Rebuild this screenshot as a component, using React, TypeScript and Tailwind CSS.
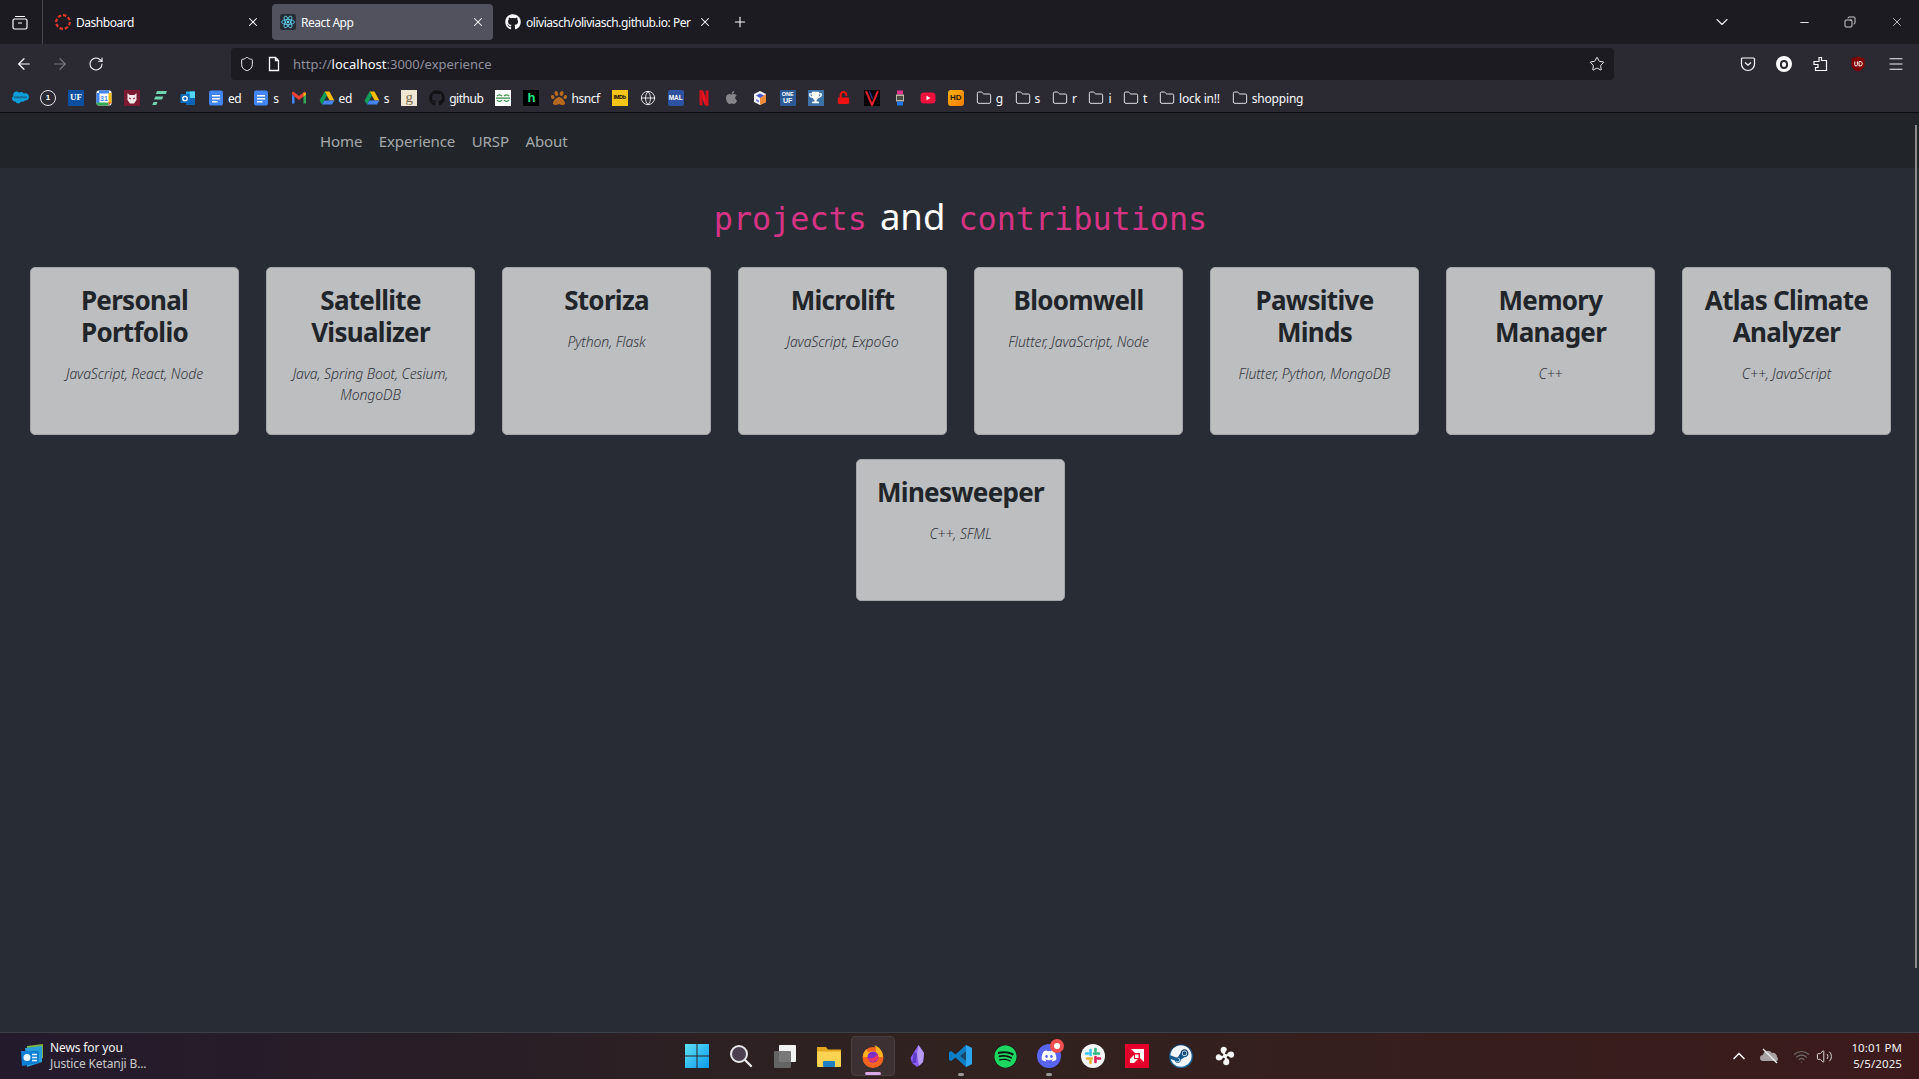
import type { ReactNode } from "react";
import { FaApple, FaDiscord, FaGithub, FaPaw, FaSalesforce, FaSpotify, FaSteam, FaTrophy, FaUnlock } from "react-icons/fa";
import { ArrowLeft, ArrowRight, ChevronDown, ChevronUp, Copy, Folder, Globe, Menu, Minus, Plus, RotateCw, Shield, Star, Volume2, Wifi, X } from "lucide-react";

const sans = "font-['Noto_Sans',sans-serif]";

const Ico = ({ children, size = 16 }: { children: ReactNode; size?: number }) => (
  <svg width={size} height={size} viewBox="0 0 16 16" className="shrink-0">
    {children}
  </svg>
);

const Box = ({ className, children }: { className: string; children?: ReactNode }) => (
  <span className={`flex h-4 w-4 shrink-0 items-center justify-center overflow-hidden font-['Liberation_Sans',sans-serif] font-bold ${className}`}>
    {children}
  </span>
);

const DocsIcon = () => (
  <Ico>
    <rect x="1" y="0.5" width="14" height="15" rx="2" fill="#4285f4" />
    <path d="M4 5h8v1.6H4zM4 8h8v1.6H4zM4 11h5.5v1.6H4z" fill="#fff" />
  </Ico>
);

const DriveIcon = () => (
  <Ico>
    <path d="M5.6 1.5h4.8l5 9h-4.8z" fill="#fbbc04" />
    <path d="M5.6 1.5l-5 9 2.4 4 5-9z" fill="#0f9d58" />
    <path d="M3 14.5h10l2.4-4H5.4z" fill="#4285f4" />
  </Ico>
);

const FolderIcon = () => <Folder size={16} color="#fbfbfe" strokeWidth={1.3} className="shrink-0" />;

const bookmarks: { icon: ReactNode; label?: string }[] = [
  { icon: <FaSalesforce size={17} color="#0d9dda" className="shrink-0" /> },
  {
    icon: (
      <span className="flex h-4 w-4 shrink-0 items-center justify-center rounded-full border-[1.5px] border-[#e8e8ea] font-['Liberation_Sans',sans-serif] text-[8px] font-bold text-white">
        1
      </span>
    ),
  },
  { icon: <Box className="bg-[#0b4f9e] font-['Liberation_Serif',serif] text-[9px] text-white">UF</Box> },
  {
    icon: (
      <Ico>
        <rect x="0.5" y="0.5" width="15" height="15" rx="2" fill="#fff" />
        <path d="M0.5 3h3v10h-3zM3 .5h10v3H3z" fill="#4285f4" />
        <path d="M12.5 3h3v10h-3z" fill="#fbbc04" />
        <path d="M0.5 12.5h12v3h-10a2 2 0 0 1-2-2z" fill="#34a853" />
        <path d="M12.5 12.5h3l-3 3z" fill="#ea4335" />
        <text x="8" y="11" textAnchor="middle" fontSize="7" fontWeight="700" fontFamily="Liberation Sans" fill="#4285f4">31</text>
      </Ico>
    ),
  },
  {
    icon: (
      <Ico>
        <rect width="16" height="16" fill="#7d1a33" />
        <path d="M3.5 3l2 2h5l2-2v7l-2.5 3.5h-4L3.500 10z" fill="#f3e9ea" />
        <path d="M5 8l2 1M11 8l-2 1" stroke="#7d1a33" strokeWidth="1" />
      </Ico>
    ),
  },
  {
    icon: (
      <Ico>
        <path d="M5 1h10l-1.200 3H3.800zM3.300 6.500h8l-1.200 3H2.100zM1.500 12h4l-1.200 3H.3z" fill="#70d5ae" />
      </Ico>
    ),
  },
  {
    icon: (
      <Ico>
        <path d="M6 1.500h9v13H6z" fill="#28a8ea" />
        <path d="M10 1.500h5v6.500h-5z" fill="#50d9ff" />
        <path d="M6 8h9v6.500H6z" fill="#0364b8" />
        <rect x="0.500" y="4" width="9" height="9" fill="#0f6cbd" />
        <circle cx="5" cy="8.500" r="2.200" fill="none" stroke="#fff" strokeWidth="1.300" />
      </Ico>
    ),
  },
  { icon: <DocsIcon />, label: "ed" },
  { icon: <DocsIcon />, label: "s" },
  {
    icon: (
      <Ico>
        <path d="M1 13.500h2.500V7L1 4.500z" fill="#4285f4" />
        <path d="M12.500 13.500H15v-9L12.500 7z" fill="#34a853" />
        <path d="M1 3.200c0-1.200 1.400-1.800 2.300-1L8 6l4.700-3.800c.9-.8 2.300-.2 2.300 1v1.300L8 10 1 4.500z" fill="#ea4335" />
        <path d="M12.500 7V2.600L15 3.200v1.300z" fill="#fbbc04" />
      </Ico>
    ),
  },
  { icon: <DriveIcon />, label: "ed" },
  { icon: <DriveIcon />, label: "s" },
  { icon: <Box className="bg-[#efe7d3] font-['Liberation_Serif',serif] text-[15px] font-normal text-[#7b6a4a]">g</Box> },
  { icon: <FaGithub size={16} color="#121214" className="shrink-0" />, label: "github" },
  {
    icon: (
      <Ico>
        <rect width="16" height="16" fill="#fff" />
        <path d="M8 8.200h7M8 8.200H1M2 6.200a3 3 0 0 1 5 0M14 6.200a3 3 0 0 0-5 0M2 10a3 3 0 0 0 5 0M14 10a3 3 0 0 1-5 0" stroke="#2f8d46" strokeWidth="1.300" fill="none" />
      </Ico>
    ),
  },
  { icon: <Box className="bg-black text-[13px] text-[#1ce783]">h</Box> },
  { icon: <FaPaw size={16} color="#b4691f" className="shrink-0" />, label: "hsncf" },
  { icon: <Box className="bg-[#f5c518] text-[5.500px] tracking-[-0.3px] text-black">IMDb</Box> },
  { icon: <Globe size={16} color="#fbfbfe" strokeWidth={1.3} className="shrink-0" /> },
  { icon: <Box className="rounded-[2px] bg-[#2e51a2] text-[6.500px] text-white">MAL</Box> },
  {
    icon: (
      <Ico>
        <path d="M3.500 .5h3.500l5.500 15H9z" fill="#f01420" />
        <path d="M3.500 .5h3v15l-3-.4zM9.500 .5h3v15h-3z" fill="#d0101a" />
      </Ico>
    ),
  },
  { icon: <FaApple size={15} color="#86868a" className="shrink-0" /> },
  {
    icon: (
      <Ico>
        <path d="M8 1l6 3v8l-6 3-6-3V4z" fill="#f2f2f8" />
        <path d="M8 8l6-4v8l-6 3z" fill="#f08a36" />
        <path d="M4 5.500l4-2 4 2-4 2.500z" fill="#4a55c8" />
        <path d="M4 9l3 1.500v2L4 11z" fill="#7a7fd8" />
      </Ico>
    ),
  },
  {
    icon: (
      <span className="flex h-4 w-4 shrink-0 flex-col items-center justify-center bg-[#2c5a96] font-['Liberation_Sans',sans-serif] text-[5.500px] font-bold leading-[6.500px] text-white">
        <span>ONE</span>
        <span className="text-[7px]">UF</span>
      </span>
    ),
  },
  {
    icon: (
      <span className="flex h-4 w-4 shrink-0 items-center justify-center bg-[#3c72a8]">
        <FaTrophy size={13} color="#fff" />
      </span>
    ),
  },
  { icon: <FaUnlock size={13} color="#ee1111" className="shrink-0" /> },
  {
    icon: (
      <Ico>
        <rect width="16" height="16" fill="#000" />
        <path d="M2 1l6 14 6-14" stroke="#e2202c" strokeWidth="2" fill="none" />
        <path d="M5.500 1l3 8" stroke="#2a3f9e" strokeWidth="1.200" />
      </Ico>
    ),
  },
  {
    icon: (
      <Ico>
        <rect x="5" y="0.500" width="6" height="4" fill="#e0338e" />
        <rect x="4" y="4.500" width="8" height="7" fill="#b9b5a5" />
        <rect x="5" y="6" width="6" height="4" fill="#4a4a44" />
        <rect x="5" y="11.500" width="6" height="4" fill="#1e74e8" />
      </Ico>
    ),
  },
  {
    icon: (
      <Ico>
        <rect x="0.500" y="2.500" width="15" height="11" rx="3.500" fill="#f0113c" />
        <path d="M6.500 5.800L10.500 8l-4 2.200z" fill="#fff" />
      </Ico>
    ),
  },
  { icon: <Box className="rounded-[3px] bg-gradient-to-br from-[#f9b10e] to-[#f57c00] text-[8px] text-[#2a1a05]">HD</Box> },
  { icon: <FolderIcon />, label: "g" },
  { icon: <FolderIcon />, label: "s" },
  { icon: <FolderIcon />, label: "r" },
  { icon: <FolderIcon />, label: "i" },
  { icon: <FolderIcon />, label: "t" },
  { icon: <FolderIcon />, label: "lock in!!" },
  { icon: <FolderIcon />, label: "shopping" },
];

const projects: { title: string[]; stack: string[] }[] = [
  { title: ["Personal", "Portfolio"], stack: ["JavaScript, React, Node"] },
  { title: ["Satellite", "Visualizer"], stack: ["Java, Spring Boot, Cesium,", "MongoDB"] },
  { title: ["Storiza"], stack: ["Python, Flask"] },
  { title: ["Microlift"], stack: ["JavaScript, ExpoGo"] },
  { title: ["Bloomwell"], stack: ["Flutter, JavaScript, Node"] },
  { title: ["Pawsitive", "Minds"], stack: ["Flutter, Python, MongoDB"] },
  { title: ["Memory", "Manager"], stack: ["C++"] },
  { title: ["Atlas Climate", "Analyzer"], stack: ["C++, JavaScript"] },
  { title: ["Minesweeper"], stack: ["C++, SFML"] },
];

const Tab = ({ icon, title, active }: { icon: ReactNode; title: string; active?: boolean }) => (
  <div className={`flex h-9 w-[221px] items-center rounded-[4px] pl-2 pr-2 ${active ? "bg-[#52525e]" : ""}`}>
    <span className="flex w-4 shrink-0 justify-center">{icon}</span>
    <span className={`${sans} ml-[5px] w-[168px] whitespace-nowrap pt-[2px] text-[12px] tracking-[-0.46px] text-[#fbfbfe]`}>{title}</span>
    <X size={14} color="#fbfbfe" strokeWidth={1.8} className="ml-[7px] shrink-0" />
  </div>
);

const Tabs = () => (
  <div className="flex h-11 shrink-0 items-center bg-[#1c1b22]">
    <div className="flex h-11 w-[43px] shrink-0 items-center justify-center border-r border-[#4a4a52] pr-[3px]">
      <svg width="16" height="16" viewBox="0 0 16 16" fill="none" stroke="#fbfbfe" strokeWidth="1.200">
        <rect x="1" y="5" width="14" height="10" rx="1.500" />
        <path d="M3 2.500h10M6 9h4" />
      </svg>
    </div>
    <div className="ml-1 flex items-center gap-1">
      <Tab
        title="Dashboard"
        icon={
          <svg width="16" height="16" viewBox="0 0 16 16" fill="none">
            <circle cx="8" cy="8" r="6.800" stroke="#e5352b" strokeWidth="2.200" strokeDasharray="3.500 1.800" />
          </svg>
        }
      />
      <Tab
        active
        title="React App"
        icon={
          <svg width="16" height="16" viewBox="0 0 16 16" fill="none">
            <rect width="16" height="16" rx="2" fill="#282c34" />
            <g stroke="#61dafb" strokeWidth="0.800">
              <ellipse cx="8" cy="8" rx="6.500" ry="2.500" />
              <ellipse cx="8" cy="8" rx="6.500" ry="2.500" transform="rotate(60 8 8)" />
              <ellipse cx="8" cy="8" rx="6.500" ry="2.500" transform="rotate(120 8 8)" />
            </g>
            <circle cx="8" cy="8" r="1.300" fill="#61dafb" />
          </svg>
        }
      />
      <Tab title="oliviasch/oliviasch.github.io: Per" icon={<FaGithub size={16} color="#fbfbfe" />} />
    </div>
    <span className="ml-2 flex w-7 justify-center">
      <Plus size={16} color="#fbfbfe" strokeWidth={1.6} />
    </span>
    <span className="ml-auto mr-[39px] flex w-10 justify-center">
      <ChevronDown size={20} color="#e8e8ec" strokeWidth={1.4} />
    </span>
    <span className="flex w-[46px] justify-center">
      <Minus size={13} color="#fff" strokeWidth={1.6} />
    </span>
    <span className="flex w-[46px] justify-center">
      <Copy size={12} color="#fff" strokeWidth={1.6} className="-scale-x-100" />
    </span>
    <span className="flex w-[46px] justify-center pl-[1px]">
      <X size={14} color="#fff" strokeWidth={1.2} />
    </span>
  </div>
);

const Toolbar = () => (
  <div className="flex h-10 shrink-0 items-center bg-[#2b2a33]">
    <span className="ml-[6px] flex w-9 justify-center">
      <ArrowLeft size={18} color="#fbfbfe" strokeWidth={1.6} />
    </span>
    <span className="flex w-[36px] justify-center">
      <ArrowRight size={18} color="#77767f" strokeWidth={1.6} />
    </span>
    <span className="flex w-9 justify-center">
      <RotateCw size={16} color="#fbfbfe" strokeWidth={1.6} />
    </span>
    <div className="ml-[117px] flex h-8 w-[1383px] items-center rounded-[4px] bg-[#1c1b22]">
      <Shield size={16} color="#fbfbfe" strokeWidth={1.4} className="ml-2" />
      <svg width="16" height="16" viewBox="0 0 16 16" fill="none" stroke="#fbfbfe" strokeWidth="1.300" className="ml-[11px]">
        <path d="M3.500 1.500h6l3 3v10h-9zM9.500 1.500v3h3" />
      </svg>
      <span className={`${sans} ml-[11px] whitespace-nowrap pt-[2px] text-[13px] text-[#8f8f9d]`}>
        http://<span className="text-[#fbfbfe]">localhost</span>:3000/experience
      </span>
      <Star size={16} color="#fbfbfe" strokeWidth={1.4} className="ml-auto mr-[9px]" />
    </div>
    <span className="ml-[124px] flex w-5 justify-center">
      <svg width="16" height="16" viewBox="0 0 16 16" fill="none" stroke="#fbfbfe" strokeWidth="1.200">
        <path d="M1.500 3a1 1 0 0 1 1-1h11a1 1 0 0 1 1 1v5a6.500 6.500 0 0 1-13 0z" />
        <path d="M5 6.500l3 2.800 3-2.800" />
      </svg>
    </span>
    <span className="ml-4 flex w-5 justify-center">
      <span className="flex h-4 w-4 items-center justify-center rounded-full bg-[#fbfbfe]">
        <span className="h-[9px] w-[8px] rounded-full border-2 border-[#2b2a33]" />
      </span>
    </span>
    <span className="ml-4 flex w-5 justify-center">
      <svg width="16" height="16" viewBox="0 0 16 16" fill="none" stroke="#fbfbfe" strokeWidth="1.200">
        <path d="M7 1.500h2.500v3h5v10h-11v-3H6v-3H2V5.500h5z" />
      </svg>
    </span>
    <span className="ml-[18px] flex w-5 justify-center">
      <svg width="16" height="16" viewBox="0 0 16 16">
        <path d="M8 .5l6.500 2v6.500c0 3-3.500 5.500-6.500 6.500-3-1-6.500-3.500-6.500-6.500V2.500z" fill="#800000" />
        <path d="M4.800 5.500v3.200a1.300 1.300 0 0 0 2.600 0V5.500M9 5.500v4.500h1a2.200 2.200 0 0 0 0-4.500z" stroke="#fff" strokeWidth="1" fill="none" />
      </svg>
    </span>
    <span className="ml-[18px] flex w-5 justify-center">
      <Menu size={18} color="#fbfbfe" strokeWidth={1.3} />
    </span>
  </div>
);

const Bookmarks = () => (
  <div className="flex h-[29px] shrink-0 items-center border-b border-[#0c0c0e] bg-[#2b2a33] pb-px pl-[6px]">
    {bookmarks.map((b, i) => (
      <span key={i} className="flex items-center gap-1 px-[6px]">
        <span className="flex w-4 shrink-0 justify-center">{b.icon}</span>
        {b.label && (
          <span className={`${sans} whitespace-nowrap pt-[2px] text-[12px] text-[#fbfbfe] ${b.label.length > 6 ? "tracking-[-0.2px]" : "tracking-[-0.45px]"}`}>
            {b.label}
          </span>
        )}
      </span>
    ))}
  </div>
);

const TaskIcon = ({ children, mark }: { children: ReactNode; mark?: "on" | "run" }) => (
  <div className={`relative flex h-[40px] w-[44px] items-center justify-center rounded-[4px] ${mark === "on" ? "border border-[#4a3f42] bg-[#3d3033]" : ""}`}>
    {children}
    {mark === "on" && <span className="absolute bottom-0 h-[3px] w-4 rounded-full bg-[#d9a8e6]" />}
    {mark === "run" && <span className="absolute bottom-0 h-[3px] w-[6px] rounded-full bg-[#9b9b9b]" />}
  </div>
);

const Taskbar = () => (
  <div className="flex h-[47px] shrink-0 items-center border-t border-[#3d3f46] bg-gradient-to-r from-[#231a2c] via-[#30221f] to-[#3c1a1c]">
    <div className="flex w-[675px] shrink-0 items-center pl-5">
      <svg width="24" height="24" viewBox="0 0 24 24" className="shrink-0">
        <path d="M7 2l16-2v14l-16 3z" fill="#7cb342" />
        <path d="M5 4l17-2v16L7 23z" fill="#2aa0da" />
        <path d="M1 7h18v12l-17 3z" fill="#0f7fd6" />
        <circle cx="7" cy="13.500" r="3.500" fill="#e8f6ff" />
        <path d="M12 10.500h5M12 13.500h5M12 16.500h5" stroke="#e8f6ff" strokeWidth="1.400" />
      </svg>
      <div className={`${sans} ml-[6px] text-[12px] leading-[16px] tracking-[-0.12px]`}>
        <div className="text-[#f4f4f4]">News for you</div>
        <div className="text-[#c9c9cc]">Justice Ketanji B...</div>
      </div>
    </div>
    <div className="flex items-center">
      <TaskIcon>
        <svg width="24" height="24" viewBox="0 0 24 24">
          <defs>
            <linearGradient id="win" x1="0" y1="0" x2="1" y2="1">
              <stop offset="0" stopColor="#5fe0f5" />
              <stop offset="1" stopColor="#0a9bef" />
            </linearGradient>
          </defs>
          <path d="M0 0h11.500v11.500H0zM12.500 0H24v11.500H12.500zM0 12.500h11.500V24H0zM12.500 12.500H24V24H12.500z" fill="url(#win)" />
        </svg>
      </TaskIcon>
      <TaskIcon>
        <svg width="24" height="24" viewBox="0 0 24 24" fill="none">
          <circle cx="10" cy="10" r="8" fill="#4b3f50" stroke="#e8e8e8" strokeWidth="2" />
          <path d="M16 16l6 6" stroke="#e8e8e8" strokeWidth="2.400" strokeLinecap="round" />
        </svg>
      </TaskIcon>
      <TaskIcon>
        <svg width="24" height="24" viewBox="0 0 24 24">
          <rect x="6" y="1" width="17" height="17" rx="1" fill="#f2f2f2" />
          <rect x="1" y="7" width="17" height="17" rx="1" fill="#6c6c6c" fillOpacity="0.900" />
        </svg>
      </TaskIcon>
      <TaskIcon>
        <svg width="24" height="24" viewBox="0 0 24 24">
          <path d="M0 3h9l2 2.500h13V22H0z" fill="#e3a81f" />
          <path d="M0 7.500h24V22a1 1 0 0 1-1 1H1a1 1 0 0 1-1-1z" fill="#ffd352" />
          <rect x="6" y="17" width="12" height="6" rx="1" fill="#1f7fc4" />
        </svg>
      </TaskIcon>
      <TaskIcon mark="on">
        <svg width="24" height="24" viewBox="0 0 24 24">
          <circle cx="12" cy="13.500" r="10.500" fill="#f5641e" />
          <path d="M2 13C2 8 5 6 6 5c0 2 1 3 2 3 2-1 5-1 7 0 0-3 0-5-2-7 6 2 9 7 9 12z" fill="#ffb11f" />
          <circle cx="12" cy="13" r="5.500" fill="#7a2fc9" />
          <path d="M6 14c2 4 7 5 10 2 2-2 1-5 0-6-1 3-4 5-10 4z" fill="#e8336b" />
        </svg>
      </TaskIcon>
      <TaskIcon>
        <svg width="24" height="24" viewBox="0 0 24 24">
          <path d="M13.500 1L19 9l-1 9-6 5-5-4-1.500-5L9 8z" fill="#8a5cf5" />
          <path d="M13.500 1L12 10l2 12 4-4 1-9z" fill="#b79bf7" />
          <path d="M9 8l3 2-1 9-4 0z" fill="#5e3ec4" />
        </svg>
      </TaskIcon>
      <TaskIcon mark="run">
        <svg width="24" height="24" viewBox="0 0 24 24">
          <path d="M17 1l6 3v16l-6 3L6.500 13.500 2 17l-2-1.200V8.200L2 7l4.500 3.500z" fill="#0a7ecb" />
          <path d="M17 1l6 3v16l-6 3zM17 7l-6 5 6 5z" fill="#2aa5ef" />
          <path d="M17 7v10l-6-5z" fill="#1f2430" fillOpacity="0.750" />
        </svg>
      </TaskIcon>
      <TaskIcon>
        <FaSpotify size={23} color="#1ed760" className="rounded-full bg-[#101010]" />
      </TaskIcon>
      <TaskIcon mark="run">
        <span className="flex h-6 w-6 items-center justify-center rounded-full bg-[#5865f2]">
          <FaDiscord size={16} color="#fff" />
        </span>
        <span className="absolute right-[7px] top-[3px] flex h-[14px] w-[14px] items-center justify-center rounded-full bg-[#f04f4f]">
          <span className="h-[6px] w-[6px] rounded-full bg-white" />
        </span>
      </TaskIcon>
      <TaskIcon>
        <svg width="24" height="24" viewBox="0 0 24 24">
          <circle cx="12" cy="12" r="12" fill="#f5f5f5" />
          <g strokeWidth="2.600" strokeLinecap="round">
            <path d="M9.500 6v5M5 9.500h2" stroke="#36c5f0" />
            <path d="M14.500 13v5M17 14.500h2" stroke="#e01e5a" />
            <path d="M13 9.500h5M14.500 5v2" stroke="#2eb67d" />
            <path d="M6 14.500h5M9.500 17v2" stroke="#ecb22e" />
          </g>
        </svg>
      </TaskIcon>
      <TaskIcon>
        <svg width="24" height="24" viewBox="0 0 24 24">
          <rect width="24" height="24" fill="#e4002b" />
          <path d="M6 5h13v13l-4-4V9H10zM10 10.500h3.500V14H10zM9 11v4h4l-4 4H5v-4z" fill="#fff" />
        </svg>
      </TaskIcon>
      <TaskIcon>
        <span className="flex h-6 w-6 items-center justify-center rounded-full bg-gradient-to-b from-[#10305a] to-[#1879b4]">
          <FaSteam size={22} color="#f2f6fa" />
        </span>
      </TaskIcon>
      <TaskIcon>
        <svg width="22" height="22" viewBox="0 0 24 24" fill="#f5f5f5">
          <circle cx="12" cy="12" r="2.500" />
          <path d="M11 10C7 9 6.500 5 8 3c2-2 6-1 6 2 0 2-2 2-2 5zM14 11c1-4 5-4.500 7-3 2 2 1 6-2 6-2 0-2-2-5-2zM13 14c4 1 4.500 5 3 7-2 2-6 1-6-2 0-2 2-2 2-5zM10 13c-1 4-5 4.500-7 3-2-2-1-6 2-6 2 0 2 2 5 2z" />
        </svg>
      </TaskIcon>
    </div>
    <div className="ml-auto flex items-center">
      <ChevronUp size={20} color="#f0f0f0" strokeWidth={2} />
      <svg width="20" height="20" viewBox="0 0 20 20" className="ml-[11px]">
        <path d="M3 15a3 3 0 0 1 0-6 5 5 0 0 1 9-2 4 4 0 0 1 5 4 2.500 2.500 0 0 1 0 4z" fill="#a7a3a3" />
        <path d="M3 3l14 14" stroke="#ededed" strokeWidth="1.400" />
      </svg>
      <Wifi size={17} color="#6e6a6a" strokeWidth={1.6} className="ml-[13px]" />
      <Volume2 size={17} color="#e6e6e6" strokeWidth={1.3} className="ml-[6px]" />
      <div className={`${sans} ml-[18px] mr-[17px] text-right text-[11.500px] leading-[16px] tracking-[0.1px] text-[#f0f0f0]`}>
        <div>10:01 PM</div>
        <div>5/5/2025</div>
      </div>
    </div>
  </div>
);

const Card = ({ title, stack }: { title: string[]; stack: string[] }) => (
  <div className="min-h-[142px] w-[209px] rounded-[5px] border border-[#a4a5a8] bg-[#bdbec0] px-2 pb-[29px] pt-4 text-center">
    <h3 className={`${sans} mb-[15px] text-[26px] font-bold leading-8 tracking-[-0.7px] text-[#212529]`}>
      {title.map((t) => (
        <div key={t}>{t}</div>
      ))}
    </h3>
    <p className={`${sans} text-[14px] font-light italic leading-[21px] tracking-[-0.1px] text-[#33363b]`}>
      {stack.map((s) => (
        <span key={s} className="block">
          {s}
        </span>
      ))}
    </p>
  </div>
);

const App = () => (
  <div className="relative flex h-[1079px] w-[1919px] flex-col overflow-hidden bg-[#282c34]">
    <Tabs />
    <Toolbar />
    <Bookmarks />
    <main className="min-h-0 flex-1">
      <nav className={`${sans} flex h-[55px] items-center gap-[16.500px] bg-[#212529] pl-[320px] pt-[2px] text-[15px] tracking-[-0.1px] text-[#a6a8aa]`}>
        <span>Home</span>
        <span>Experience</span>
        <span>URSP</span>
        <span>About</span>
      </nav>
      <h1 className="flex h-[99px] items-baseline justify-center pl-[2px] pt-[21px] text-[#fff]">
        <code className="font-['DejaVu_Sans_Mono',monospace] text-[31.800px] text-[#d63384]">projects</code>
        <span className={`${sans} mx-[13px] text-[36.500px]`}>and</span>
        <code className="font-['DejaVu_Sans_Mono',monospace] text-[31.800px] text-[#d63384]">contributions</code>
      </h1>
      <section className="flex flex-wrap justify-center gap-x-[27px] gap-y-6 pl-[2px]">
        {projects.map((p) => (
          <Card key={p.title[0]} title={p.title} stack={p.stack} />
        ))}
      </section>
    </main>
    <div className="absolute right-[2px] top-[125px] h-[843px] w-[2px] bg-[#8a8b8d]" />
    <Taskbar />
  </div>
);

export default App;
